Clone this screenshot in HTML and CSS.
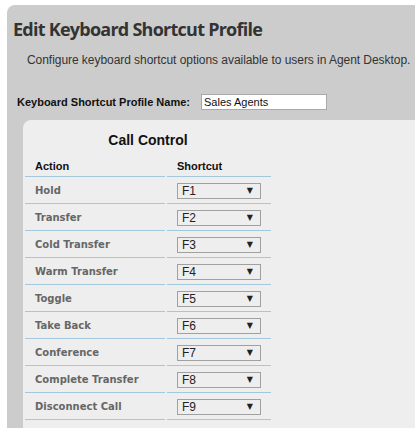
FILE: index.html
```html
<!DOCTYPE html>
<html>
<head>
<meta charset="utf-8">
<link rel="stylesheet" href="styles.css">
</head>
<body>
<div class="page">
  <h1 class="title">Edit Keyboard Shortcut Profile</h1>
  <p class="desc">Configure keyboard shortcut options available to users in Agent Desktop.</p>
  <div class="name-row">
    <span class="name-label">Keyboard Shortcut Profile Name:</span>
    <div class="name-input">Sales Agents</div>
  </div>
  <div class="panel">
    <div class="section">
      <div class="caption">Call Control</div>
      <div class="grid">
        <div class="hcell">Action</div>
        <div class="hcell">Shortcut</div>

        <div class="cell label">Hold</div>
        <div class="cell"><div class="select"><span>F1</span><span class="arrow">▼</span></div></div>

        <div class="cell label">Transfer</div>
        <div class="cell"><div class="select"><span>F2</span><span class="arrow">▼</span></div></div>

        <div class="cell label">Cold Transfer</div>
        <div class="cell"><div class="select"><span>F3</span><span class="arrow">▼</span></div></div>

        <div class="cell label">Warm Transfer</div>
        <div class="cell"><div class="select"><span>F4</span><span class="arrow">▼</span></div></div>

        <div class="cell label">Toggle</div>
        <div class="cell"><div class="select"><span>F5</span><span class="arrow">▼</span></div></div>

        <div class="cell label">Take Back</div>
        <div class="cell"><div class="select"><span>F6</span><span class="arrow">▼</span></div></div>

        <div class="cell label">Conference</div>
        <div class="cell"><div class="select"><span>F7</span><span class="arrow">▼</span></div></div>

        <div class="cell label">Complete Transfer</div>
        <div class="cell"><div class="select"><span>F8</span><span class="arrow">▼</span></div></div>

        <div class="cell label">Disconnect Call</div>
        <div class="cell"><div class="select"><span>F9</span><span class="arrow">▼</span></div></div>
      </div>
    </div>
  </div>
</div>
</body>
</html>
```

FILE: styles.css
```css
html, body {
  margin: 0;
  padding: 0;
  background: #ffffff;
  height: 100%;
  overflow: hidden;
}

.page {
  margin: 5px 0 0 7px;
  background: #cccccc;
  border-top-left-radius: 8px;
  padding-top: 12px;
  font-family: "Liberation Sans", Arial, sans-serif;
}

.title {
  margin: 0;
  padding-left: 6px;
  font-family: "Open Sans", sans-serif;
  font-weight: 700;
  font-size: 18px;
  line-height: 24px;
  letter-spacing: -0.75px;
  color: #333333;
  white-space: nowrap;
}

.desc {
  margin: 12px 0 0 0;
  padding-left: 20px;
  font-size: 12px;
  line-height: 15px;
  letter-spacing: -0.05px;
  color: #333333;
  white-space: nowrap;
}

.name-row {
  display: flex;
  align-items: center;
  margin-top: 26px;
  padding-left: 10px;
  gap: 11px;
}

.name-label {
  font-size: 11px;
  font-weight: 700;
  color: #111111;
  white-space: nowrap;
}

.name-input {
  box-sizing: border-box;
  width: 126px;
  height: 16px;
  background: #ffffff;
  border: 1px solid #a9a9a9;
  font-size: 11px;
  line-height: 14px;
  padding-left: 2px;
  color: #111111;
}

.panel {
  margin: 10px 0 0 16px;
  background: #eeeeee;
  border-top-left-radius: 8px;
  padding: 11px 0 9px 2px;
}

.section {
  width: 246px;
}

.caption {
  text-align: center;
  font-size: 14px;
  font-weight: 700;
  line-height: 18px;
  color: #111111;
}

.grid {
  display: grid;
  grid-template-columns: 140px 104px;
  column-gap: 2px;
}

.hcell {
  padding: 9px 0 2px 10px;
  font-size: 11px;
  font-weight: 700;
  line-height: 16px;
  color: #111111;
  border-bottom: 1px solid #a3c8dd;
}

.cell {
  padding: 6px 0 4px 10px;
  line-height: 16px;
  border-bottom: 1px solid #a3c8dd;
}

.label {
  font-family: "DejaVu Sans", Verdana, sans-serif;
  font-size: 10px;
  font-weight: 700;
  color: #666666;
  white-space: nowrap;
}

.select {
  box-sizing: border-box;
  width: 84px;
  height: 16px;
  border: 1px solid #a0a0a0;
  background: #eeeeee;
  display: flex;
  align-items: center;
  justify-content: space-between;
  padding: 0 7px 0 4px;
  font-size: 12px;
  line-height: 14px;
  color: #222222;
}

.arrow {
  font-family: "DejaVu Sans", sans-serif;
  font-size: 8px;
  color: #222222;
}
```
